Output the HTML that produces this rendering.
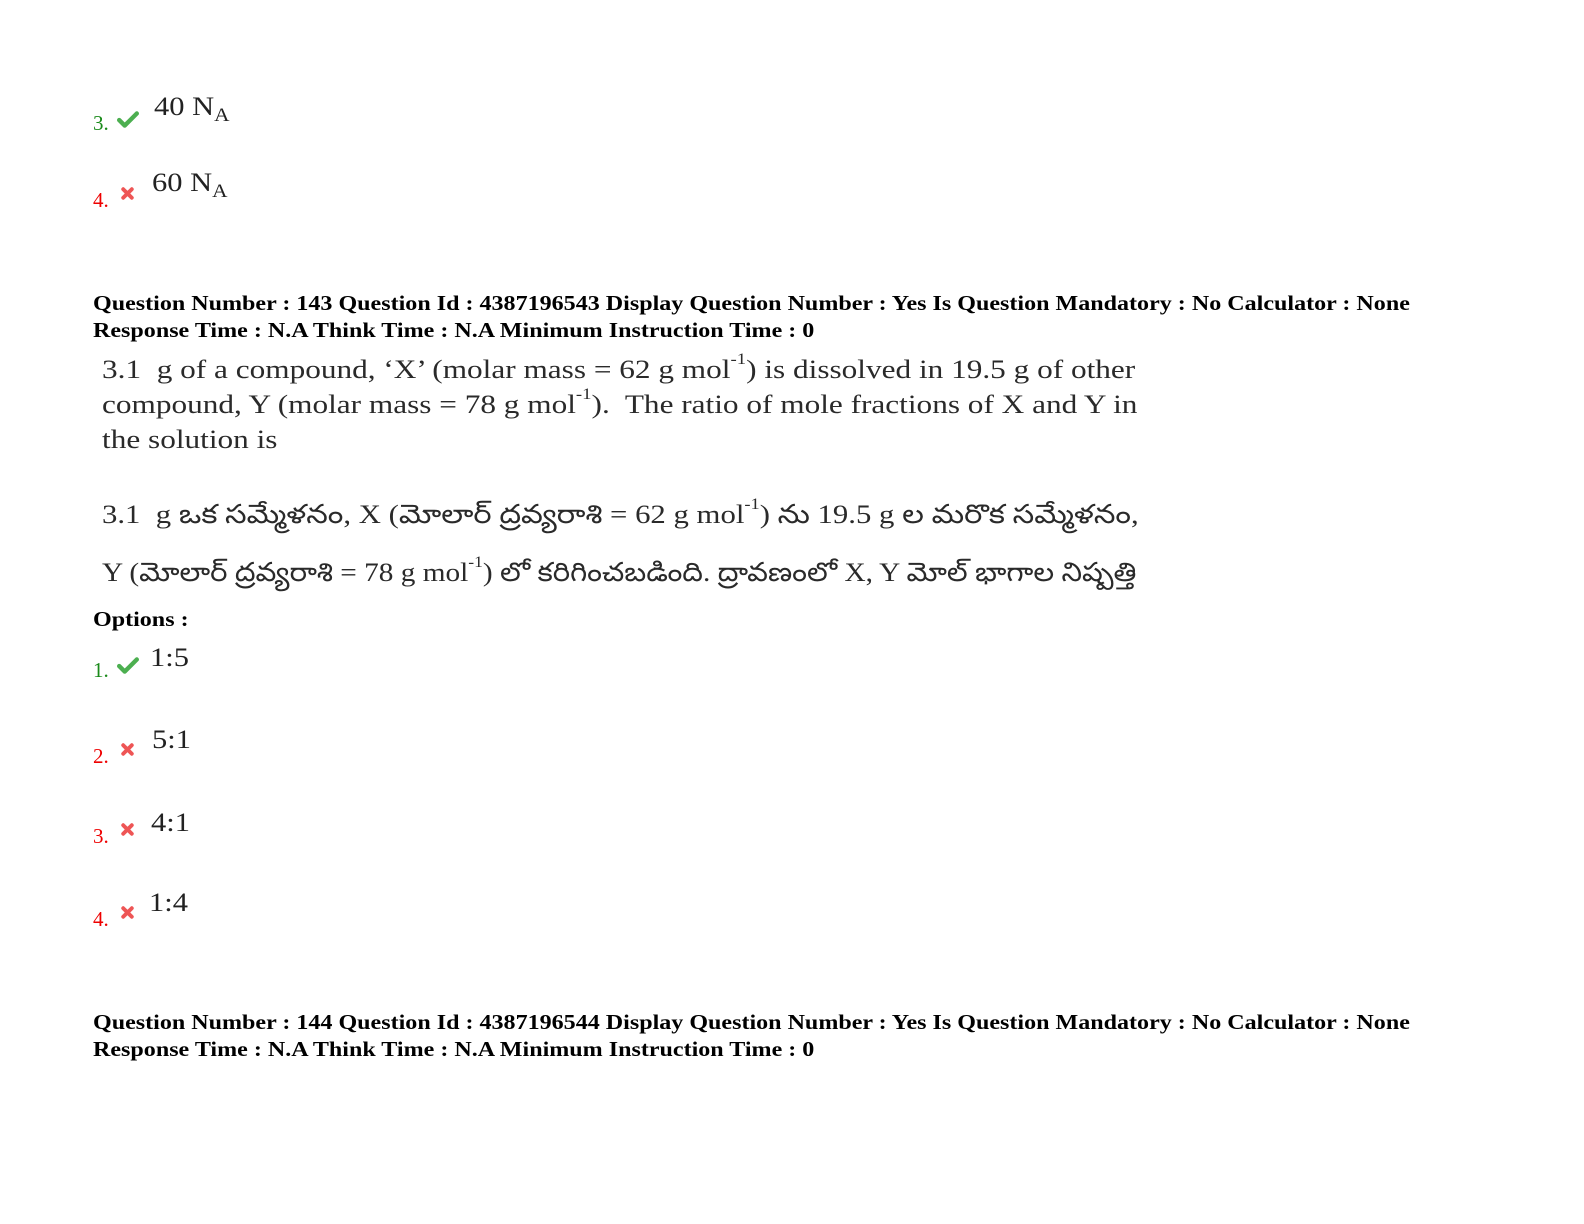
<!DOCTYPE html>
<html><head><meta charset="utf-8"><style>
body{margin:0;width:1584px;height:1224px;background:#fff;position:relative;overflow:hidden;font-family:"Liberation Serif",serif}
.a{position:absolute;white-space:nowrap;transform-origin:0 50%}
.h{font-weight:bold;font-size:21.6px;color:#000;left:93px;transform:scaleX(1.114)}
.n{font-size:21px}
.g{color:#1a8a1a}.r{color:#e00}
.t{font-size:26.5px;color:#2a2a2a}
.q{transform:scaleX(1.18)}
.te{transform:scaleX(1.105)}
.te1{transform:scaleX(1.16)}
.o{transform:scaleX(1.15)}
sup{font-size:60%;vertical-align:top;position:relative;top:-3px}
sub{font-size:70%;vertical-align:baseline;position:relative;top:6px}
</style></head><body>
<svg width="0" height="0" style="position:absolute"><defs>
<symbol id="ck" viewBox="0 0 20 16"><path d="M2 9 L7 14 L18 3" stroke="#4caf50" stroke-width="4" fill="none" stroke-linecap="round" stroke-linejoin="round"/></symbol>
<symbol id="x" viewBox="0 0 14 14"><path d="M3 3 L11 11 M11 3 L3 11" stroke="#e55" stroke-width="3.6" stroke-linecap="round"/></symbol>
</defs></svg>

<div class="a n g" style="left:93px;top:111px">3.</div>
<svg class="a" style="left:117px;top:110px" width="22" height="18"><use href="#ck"/></svg>
<div class="a t o" style="left:154px;top:91px;color:#222">40 N<sub>A</sub></div>
<div class="a n r" style="left:93px;top:188px">4.</div>
<svg class="a" style="left:120px;top:186px" width="15" height="15"><use href="#x"/></svg>
<div class="a t o" style="left:152px;top:167px;color:#222">60 N<sub>A</sub></div>

<div class="a h" style="top:291px">Question Number : 143 Question Id : 4387196543 Display Question Number : Yes Is Question Mandatory : No Calculator : None</div>
<div class="a h" style="top:318px">Response Time : N.A Think Time : N.A Minimum Instruction Time : 0</div>

<div class="a t q" style="left:102px;top:354px">3.1&nbsp; g of a compound, ‘X’ (molar mass = 62 g mol<sup>-1</sup>) is dissolved in 19.5 g of other</div>
<div class="a t q" style="left:102px;top:389px">compound, Y (molar mass = 78 g mol<sup>-1</sup>).&nbsp; The ratio of mole fractions of X and Y in</div>
<div class="a t q" style="left:102px;top:424px">the solution is</div>
<div class="a t te1" style="left:102px;top:499px">3.1&nbsp; g ఒక సమ్మేళనం, X (మోలార్ ద్రవ్యరాశి = 62 g mol<sup>-1</sup>) ను 19.5 g ల మరొక సమ్మేళనం,</div>
<div class="a t te" style="left:102px;top:557px">Y (మోలార్ ద్రవ్యరాశి = 78 g mol<sup>-1</sup>) లో కరిగించబడింది. ద్రావణంలో X, Y మోల్ భాగాల నిష్పత్తి</div>

<div class="a h" style="top:607px">Options :</div>
<div class="a n g" style="left:93px;top:658px">1.</div>
<svg class="a" style="left:117px;top:656px" width="22" height="18"><use href="#ck"/></svg>
<div class="a t o" style="left:150px;top:642px;color:#222">1:5</div>
<div class="a n r" style="left:93px;top:744px">2.</div>
<svg class="a" style="left:120px;top:742px" width="15" height="15"><use href="#x"/></svg>
<div class="a t o" style="left:152px;top:724px;color:#222">5:1</div>
<div class="a n r" style="left:93px;top:824px">3.</div>
<svg class="a" style="left:120px;top:822px" width="15" height="15"><use href="#x"/></svg>
<div class="a t o" style="left:151px;top:807px;color:#222">4:1</div>
<div class="a n r" style="left:93px;top:907px">4.</div>
<svg class="a" style="left:120px;top:905px" width="15" height="15"><use href="#x"/></svg>
<div class="a t o" style="left:149px;top:887px;color:#222">1:4</div>

<div class="a h" style="top:1010px">Question Number : 144 Question Id : 4387196544 Display Question Number : Yes Is Question Mandatory : No Calculator : None</div>
<div class="a h" style="top:1037px">Response Time : N.A Think Time : N.A Minimum Instruction Time : 0</div>
</body></html>
